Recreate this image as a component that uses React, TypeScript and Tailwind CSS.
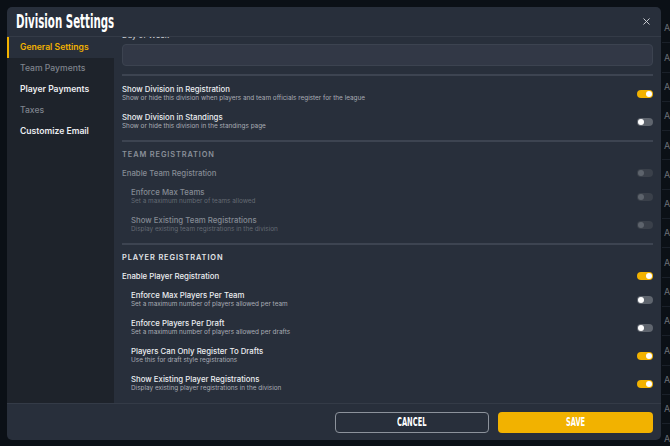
import { X } from "lucide-react";

const cond = "font-['Liberation_Sans_Narrow','DejaVu_Sans_Condensed',sans-serif]";

const navItems = [
  { label: "General Settings", state: "active" },
  { label: "Team Payments", state: "muted" },
  { label: "Player Payments", state: "normal" },
  { label: "Taxes", state: "muted" },
  { label: "Customize Email", state: "normal" },
];

function Toggle({ on, disabled }: { on?: boolean; disabled?: boolean }) {
  if (disabled) {
    return (
      <div className="flex h-[8px] w-[16px] shrink-0 items-center rounded-full bg-[#3a404a] px-[1px]">
        <div className="h-[6px] w-[6px] rounded-full bg-[#5d636c]" />
      </div>
    );
  }
  return (
    <div
      className={
        on
          ? "flex h-[8px] w-[16px] shrink-0 items-center justify-end rounded-full bg-[#f2b200] px-[1px]"
          : "flex h-[8px] w-[16px] shrink-0 items-center rounded-full bg-[#5f656e] px-[1px]"
      }
    >
      <div className="h-[6px] w-[6px] rounded-full bg-white" />
    </div>
  );
}

function Row({
  title,
  sub,
  on,
  disabled,
  indent,
}: {
  title: string;
  sub?: string;
  on?: boolean;
  disabled?: boolean;
  indent?: boolean;
}) {
  return (
    <div className={indent ? "flex items-center justify-between pl-[9px]" : "flex items-center justify-between"}>
      <div>
        <div
          className={
            disabled
              ? "text-[7.8px] leading-[10px] font-medium text-[#858b94]"
              : "text-[7.8px] leading-[10px] font-medium text-[#eceef1]"
          }
        >
          {title}
        </div>
        {sub && (
          <div
            className={
              disabled
                ? "text-[6.4px] leading-[9px] text-[#646a73]"
                : "text-[6.4px] leading-[9px] text-[#a8adb5]"
            }
          >
            {sub}
          </div>
        )}
      </div>
      <Toggle on={on} disabled={disabled} />
    </div>
  );
}

export default function App() {
  return (
    <div className="relative h-[446px] w-[670px] overflow-hidden bg-[#0b1016] font-['Inter',sans-serif]">
      {/* page behind the dialog */}
      <div className="flex flex-col pl-[662px] pt-[14px]">
        {Array.from({ length: 15 }).map((_, i) => (
          <div
            key={i}
            className="flex h-[29.3px] items-center border-b border-[#1a2029] pl-[2px] text-[9px] text-[#6b7079]"
          >
            A
          </div>
        ))}
      </div>

      <div className="absolute left-[7px] top-[7px] flex h-[433px] w-[654px] flex-col overflow-hidden rounded-[5px] bg-[#282f3b]">
        <div className="flex h-[30px] shrink-0 items-center justify-between border-b border-[#343b47] pl-[9px] pr-[9px]">
          <div className={`${cond} origin-left scale-x-[0.6] text-[19px] font-bold leading-none whitespace-nowrap text-white`}>
            Division Settings
          </div>
          <X size={11} strokeWidth={2} className="text-[#d5d8dc]" />
        </div>

        <div className="flex min-h-0 flex-1">
          <div className="flex w-[107px] shrink-0 flex-col bg-[#1e232b]">
            {navItems.map((item) => (
              <div
                key={item.label}
                className={
                  item.state === "active"
                    ? "flex h-[21px] items-center border-l-2 border-[#f2b200] bg-[#282f3b] pl-[11px] text-[8.6px] font-semibold text-[#f2b200]"
                    : item.state === "muted"
                    ? "flex h-[21px] items-center pl-[13px] text-[8.6px] font-medium text-[#7e848d]"
                    : "flex h-[21px] items-center pl-[13px] text-[8.6px] font-semibold text-[#eceef1]"
                }
              >
                {item.label}
              </div>
            ))}
          </div>

          <div className="min-w-0 flex-1 overflow-hidden pl-[8px] pr-[8px]">
            <div className="-mt-[7px] flex flex-col">
              <div className="text-[7.8px] leading-[10px] font-medium text-[#c9ccd1]">Day of Week</div>
              <div className="mt-[4px] h-[22px] rounded-[4px] border border-[#3c4350] bg-[#323846]" />
              <div className="mt-[8px] h-[2px] bg-[#3d4451]" />

              <div className="mt-[8px] flex flex-col gap-[9px]">
                <Row
                  title="Show Division in Registration"
                  sub="Show or hide this division when players and team officials register for the league"
                  on
                />
                <Row title="Show Division in Standings" sub="Show or hide this division in the standings page" />
              </div>
              <div className="mt-[9px] h-[2px] bg-[#3d4451]" />

              <div className="mt-[8px] text-[7.4px] leading-[9px] font-semibold tracking-[0.12em] text-[#8a9099]">
                TEAM REGISTRATION
              </div>
              <div className="mt-[9px] flex flex-col gap-[9px]">
                <Row title="Enable Team Registration" disabled />
                <Row title="Enforce Max Teams" sub="Set a maximum number of teams allowed" disabled indent />
                <Row
                  title="Show Existing Team Registrations"
                  sub="Display existing team registrations in the division"
                  disabled
                  indent
                />
              </div>
              <div className="mt-[9px] h-[2px] bg-[#3d4451]" />

              <div className="mt-[8px] text-[7.4px] leading-[9px] font-semibold tracking-[0.12em] text-[#e3e5e8]">
                PLAYER REGISTRATION
              </div>
              <div className="mt-[9px] flex flex-col gap-[9px]">
                <Row title="Enable Player Registration" on />
                <Row
                  title="Enforce Max Players Per Team"
                  sub="Set a maximum number of players allowed per team"
                  indent
                />
                <Row title="Enforce Players Per Draft" sub="Set a maximum number of players allowed per drafts" indent />
                <Row title="Players Can Only Register To Drafts" sub="Use this for draft style registrations" on indent />
                <Row
                  title="Show Existing Player Registrations"
                  sub="Display existing player registrations in the division"
                  on
                  indent
                />
              </div>
            </div>
          </div>
        </div>

        <div className="flex h-[37px] shrink-0 items-center justify-end gap-[9px] border-t border-[#343b47] pr-[8px]">
          <button className="flex h-[21px] w-[154px] items-center justify-center rounded-[4px] border border-[#8c929b]">
            <span className={`${cond} scale-x-[0.62] text-[12px] font-bold text-white`}>CANCEL</span>
          </button>
          <button className="flex h-[21px] w-[155px] items-center justify-center rounded-[4px] bg-[#f2b200]">
            <span className={`${cond} scale-x-[0.62] text-[12px] font-bold text-white`}>SAVE</span>
          </button>
        </div>
      </div>
    </div>
  );
}
